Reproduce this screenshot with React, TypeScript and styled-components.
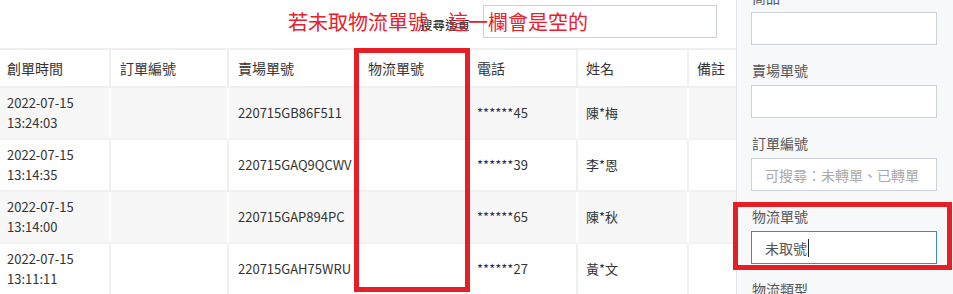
import React from 'react';
import styled, { createGlobalStyle } from 'styled-components';

const GlobalStyle = createGlobalStyle`
    body {
        margin: 0;
        background: #fff;
        font-family: "Noto Sans CJK TC", "Noto Sans", sans-serif;
        color: #333;
    }
`

const Page = styled.div`
    position: relative;
    display: flex;
    width: 953px;
    height: 294px;
    overflow: hidden;
`

const Main = styled.div`
    flex: 1;
    min-width: 0;
    overflow: hidden;
`

const SearchBar = styled.div`
    display: flex;
    justify-content: flex-end;
    align-items: center;
    gap: 13px;
    height: 48px;
    padding: 0 19px 0 0;
    box-sizing: border-box;
    font-size: 12.5px;
    color: #222;
`

const SearchInput = styled.div`
    width: 234px;
    height: 33px;
    margin-top: -5px;
    box-sizing: border-box;
    border: 1px solid #cdd1d9;
    background: #fff;
`

const Table = styled.table`
    table-layout: fixed;
    border-collapse: separate;
    border-spacing: 0;
    width: 809px;
    font-size: 13px;
`

const Th = styled.th<{ $pad?: number }>`
    height: 36px;
    padding: 0 0 0 ${p => p.$pad ?? 9}px;
    text-align: left;
    font-weight: 400;
    font-size: 14px;
    color: #333;
    background: #fff;
    border-top: 2px solid #f0f0f0;
    border-bottom: 2px solid #f0f0f0;
    border-right: 2px solid #f0f0f0;
`

const Td = styled.td<{ $odd: boolean; $pad?: number }>`
    height: 50px;
    padding: 0 0 0 ${p => p.$pad ?? 9}px;
    line-height: 20px;
    color: #333;
    background: ${p => (p.$odd ? '#f7f7f7' : '#fff')};
    border-right: 2px solid ${p => (p.$odd ? '#fff' : '#f0f0f0')};
    border-bottom: 2px solid #f2f2f2;
    white-space: nowrap;
    overflow: hidden;
`

const Drawer = styled.aside`
    width: 217px;
    flex: none;
    background: #f7f8fa;
    border-left: 1px solid #e1e4ea;
    box-sizing: border-box;
    padding: 0 16px 0 14px;
`

const FieldList = styled.div`
    margin-top: -13px;
    display: flex;
    flex-direction: column;
    gap: 15px;
`

const Group = styled.div`
    display: flex;
    flex-direction: column;
    gap: 5px;
`

const Label = styled.div`
    height: 20px;
    line-height: 20px;
    font-size: 14px;
    color: #555;
    padding-left: 1px;
`

const Field = styled.div<{ $focused?: boolean }>`
    height: 33px;
    box-sizing: border-box;
    border: 1px solid ${p => (p.$focused ? '#3f8ac4' : '#ccd1da')};
    background: #fff;
    display: flex;
    align-items: center;
    padding-left: 13px;
    font-size: 14px;
    color: #555;
`

const Placeholder = styled.span`
    color: #aaa;
`

const Caret = styled.span`
    display: inline-block;
    width: 1px;
    height: 18px;
    background: #222;
    margin-left: 1px;
`

// 標註
const Note = styled.div`
    position: absolute;
    left: 288px;
    top: 10px;
    font-size: 20px;
    line-height: 24px;
    color: #e8202a;
    white-space: nowrap;
    z-index: 2;
`

const Mark = styled.div`
    position: absolute;
    border: 5px solid #e61e25;
    box-sizing: border-box;
    z-index: 3;
`

type Row = { time: string[]; shop: string; phone: string; name: string }

const rows: Row[] = [
    { time: ['2022-07-15', '13:24:03'], shop: '220715GB86F511', phone: '******45', name: '陳*梅' },
    { time: ['2022-07-15', '13:14:35'], shop: '220715GAQ9QCWV', phone: '******39', name: '李*恩' },
    { time: ['2022-07-15', '13:14:00'], shop: '220715GAP894PC', phone: '******65', name: '陳*秋' },
    { time: ['2022-07-15', '13:11:11'], shop: '220715GAH75WRU', phone: '******27', name: '黃*文' },
]

const widths = [111, 118, 128, 111, 110, 111, 120]

export default function App() {
    return (
        <Page>
            <GlobalStyle />
            <Main>
                <SearchBar>
                    <span>搜尋這頁</span>
                    <SearchInput />
                </SearchBar>
                <Table>
                    <colgroup>
                        {widths.map((w, i) => <col key={i} style={{ width: w }} />)}
                    </colgroup>
                    <thead>
                        <tr>
                            <Th $pad={7}>創單時間</Th>
                            <Th>訂單編號</Th>
                            <Th>賣場單號</Th>
                            <Th $pad={11}>物流單號</Th>
                            <Th>電話</Th>
                            <Th $pad={8}>姓名</Th>
                            <Th $pad={8}>備註</Th>
                        </tr>
                    </thead>
                    <tbody>
                        {rows.map((r, i) => {
                            const odd = i % 2 === 0
                            return (
                                <tr key={r.shop}>
                                    <Td $odd={odd} $pad={7}>{r.time[0]}<br />{r.time[1]}</Td>
                                    <Td $odd={odd}></Td>
                                    <Td $odd={odd}>{r.shop}</Td>
                                    <Td $odd={odd}></Td>
                                    <Td $odd={odd}>{r.phone}</Td>
                                    <Td $odd={odd} $pad={8}>{r.name}</Td>
                                    <Td $odd={odd}></Td>
                                </tr>
                            )
                        })}
                    </tbody>
                </Table>
            </Main>

            {/* 搜尋欄 */}
            <Drawer>
                <FieldList>
                    <Group>
                        <Label>商品</Label>
                        <Field />
                    </Group>
                    <Group>
                        <Label>賣場單號</Label>
                        <Field />
                    </Group>
                    <Group>
                        <Label>訂單編號</Label>
                        <Field><Placeholder>可搜尋：未轉單、已轉單</Placeholder></Field>
                    </Group>
                    <Group>
                        <Label>物流單號</Label>
                        <Field $focused>未取號<Caret /></Field>
                    </Group>
                    <Group>
                        <Label>物流類型</Label>
                        <Field />
                    </Group>
                </FieldList>
            </Drawer>

            <Note>若未取物流單號　這一欄會是空的</Note>
            <Mark style={{ left: 354, top: 48, width: 116, height: 244 }} />
            <Mark style={{ left: 733, top: 202, width: 219, height: 68 }} />
        </Page>
    )
}
